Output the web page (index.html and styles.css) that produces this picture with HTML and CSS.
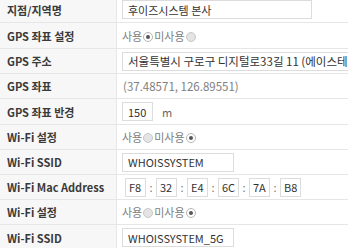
FILE: index.html
```html
<!DOCTYPE html>
<html>
<head>
<meta charset="utf-8">
<link rel="stylesheet" href="styles.css">
</head>
<body>
<div class="form">
  <div class="row h26">
    <div class="label">지점/지역명</div>
    <div class="value"><input class="inp w190" value="후이즈시스템 본사"></div>
  </div>
  <div class="row h26">
    <div class="label">GPS 좌표 설정</div>
    <div class="value muted">사용<span class="radio on"></span> 미사용<span class="radio"></span></div>
  </div>
  <div class="row h25">
    <div class="label">GPS 주소</div>
    <div class="value"><input class="inp wide addr" value="서울특별시 구로구 디지털로33길 11 (에이스테크노타워 5차)"></div>
  </div>
  <div class="row h25">
    <div class="label">GPS 좌표</div>
    <div class="value muted coord">(37.48571, 126.89551)</div>
  </div>
  <div class="row h26">
    <div class="label">GPS 좌표 반경</div>
    <div class="value"><input class="inp w32" value="150"><span class="unit">m</span></div>
  </div>
  <div class="row h25">
    <div class="label">Wi-Fi 설정</div>
    <div class="value muted">사용<span class="radio"></span>미사용<span class="radio on"></span></div>
  </div>
  <div class="row h25">
    <div class="label">Wi-Fi SSID</div>
    <div class="value"><input class="inp w112" value="WHOISSYSTEM"></div>
  </div>
  <div class="row h25">
    <div class="label">Wi-Fi Mac Address</div>
    <div class="value mac">
      <input class="inp mbox" value="F8"><span class="colon">:</span>
      <input class="inp mbox" value="32"><span class="colon">:</span>
      <input class="inp mbox" value="E4"><span class="colon">:</span>
      <input class="inp mbox" value="6C"><span class="colon">:</span>
      <input class="inp mbox" value="7A"><span class="colon">:</span>
      <input class="inp mbox" value="B8">
    </div>
  </div>
  <div class="row h25">
    <div class="label">Wi-Fi 설정</div>
    <div class="value muted">사용<span class="radio"></span>미사용<span class="radio on"></span></div>
  </div>
  <div class="row h26">
    <div class="label">Wi-Fi SSID</div>
    <div class="value"><input class="inp w112" value="WHOISSYSTEM_5G"></div>
  </div>
</div>
</body>
</html>
```
FILE: styles.css
```css
html, body {
  margin: 0;
  padding: 0;
  background: #fff;
  overflow: hidden;
}
body {
  font-family: "Noto Sans CJK KR", "Noto Sans", sans-serif;
  font-size: 11px;
  color: #333;
}
.form {
  margin-top: -3px;
  width: 348px;
  overflow: hidden;
}
.row {
  display: flex;
  box-sizing: border-box;
  border-bottom: 1px solid #e6e6e6;
}
.h25 { height: 25px; }
.h26 { height: 26px; }
.label {
  width: 117px;
  flex: none;
  box-sizing: border-box;
  background: #f7f7f7;
  border-right: 1px solid #e6e6e6;
  padding-left: 7px;
  font-weight: bold;
  color: #3a3a3a;
  display: flex;
  align-items: center;
  white-space: nowrap;
}
.value {
  flex: 1;
  min-width: 0;
  padding-left: 5px;
  display: flex;
  align-items: center;
  white-space: nowrap;
}
.muted {
  color: #808080;
}
.coord {
  font-size: 11.5px;
  padding-left: 6px;
}
.inp {
  box-sizing: border-box;
  flex: none;
  height: 19px;
  border: 1px solid #dcdcdc;
  font-family: "Noto Sans CJK KR", "Noto Sans", sans-serif;
  font-size: 11px;
  color: #333;
  padding: 0 5px;
  margin: 0;
  outline: none;
  background: #fff;
}
.addr {
  font-size: 11.5px;
}
.w190 { width: 190px; }
.wide { width: 300px; }
.w32 { width: 31px; }
.w112 { width: 112px; }
.unit {
  margin-left: 9px;
  color: #666;
}
.mac {
  padding-left: 8px;
}
.mac .mbox {
  width: 21px;
  padding: 0 3px;
}
.colon {
  width: 10px;
  text-align: center;
  color: #777;
}
.radio {
  display: inline-block;
  box-sizing: border-box;
  width: 10px;
  height: 10px;
  border-radius: 50%;
  border: 1px solid #c8c8c8;
  background: #e4e4e4;
  margin: 0 1px;
  position: relative;
  top: 1px;
}
.radio.on {
  background: #fff;
  border-color: #b5b5b5;
}
.radio.on::after {
  content: "";
  position: absolute;
  left: 2px;
  top: 2px;
  width: 4px;
  height: 4px;
  border-radius: 50%;
  background: #555;
}
```
